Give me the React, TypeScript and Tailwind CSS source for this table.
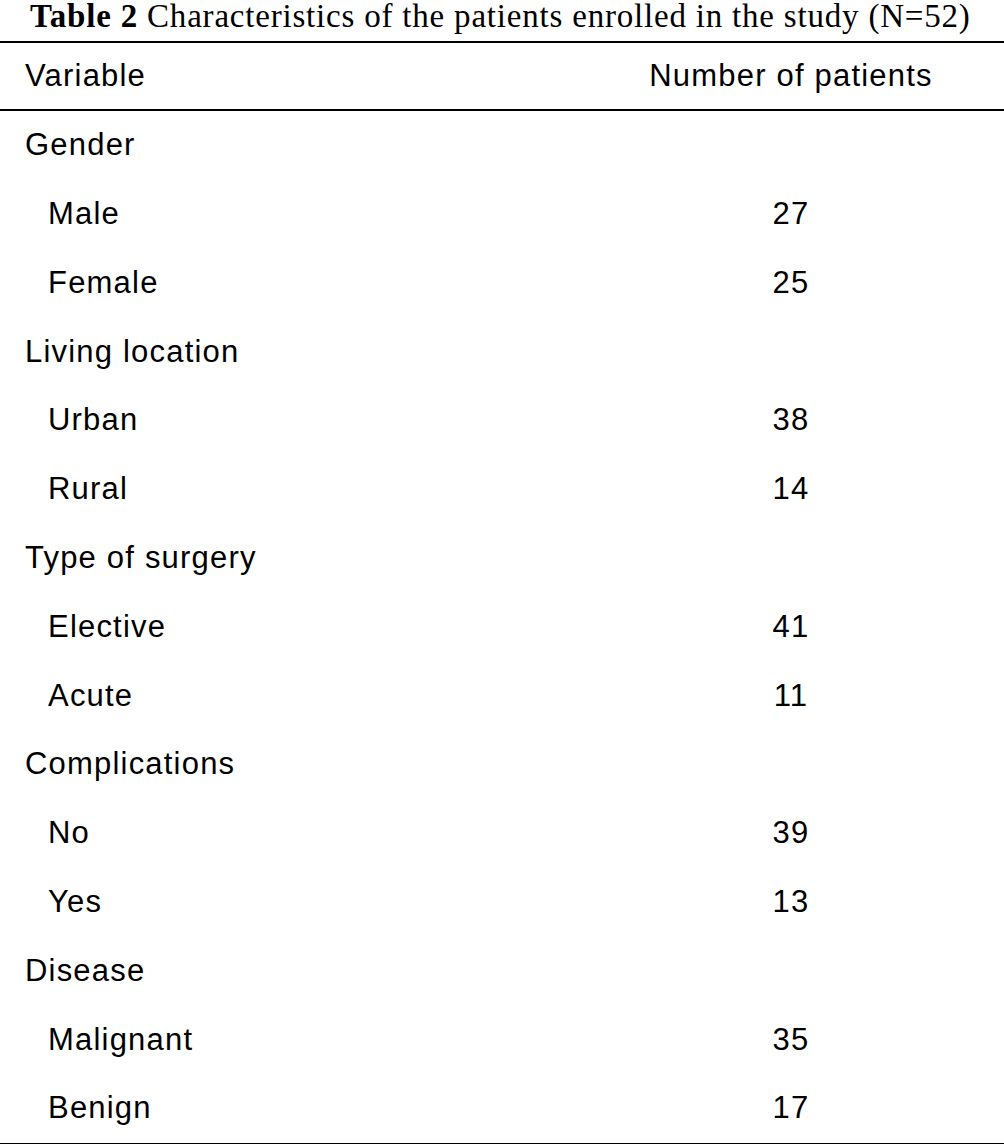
const rows: { label: string; value?: string; sub?: boolean }[] = [
  { label: "Gender" },
  { label: "Male", value: "27", sub: true },
  { label: "Female", value: "25", sub: true },
  { label: "Living location" },
  { label: "Urban", value: "38", sub: true },
  { label: "Rural", value: "14", sub: true },
  { label: "Type of surgery" },
  { label: "Elective", value: "41", sub: true },
  { label: "Acute", value: "11", sub: true },
  { label: "Complications" },
  { label: "No", value: "39", sub: true },
  { label: "Yes", value: "13", sub: true },
  { label: "Disease" },
  { label: "Malignant", value: "35", sub: true },
  { label: "Benign", value: "17", sub: true },
];

export default function App() {
  return (
    <div className="h-[1144px] w-[1004px] overflow-hidden bg-white text-black">
      <div className="h-[41px] pt-[2px]">
        <h1 className="whitespace-nowrap pl-[30px] font-['Liberation_Serif',serif] text-[33px] leading-[28px] tracking-[0.8px]">
          <span className="font-bold">Table 2</span> Characteristics of the patients enrolled in
          the study (N=52)
        </h1>
      </div>
      <div className="border-y-2 border-black font-['Liberation_Sans',Arial,sans-serif] text-[31px] tracking-[1.2px]">
        <div className="flex h-[66px] items-center">
          <div className="flex-1 pl-[25px]">Variable</div>
          <div className="w-[426px] text-center">Number of patients</div>
        </div>
      </div>
      <div className="border-b-2 border-black font-['Liberation_Sans',Arial,sans-serif] text-[31px] tracking-[1.2px]">
        {rows.map((row) => (
          <div key={row.label} className="flex h-[68.8px] items-center">
            <div className={row.sub ? "flex-1 pl-[48px]" : "flex-1 pl-[25px]"}>{row.label}</div>
            <div className="w-[426px] text-center">{row.value ?? ""}</div>
          </div>
        ))}
      </div>
    </div>
  );
}
